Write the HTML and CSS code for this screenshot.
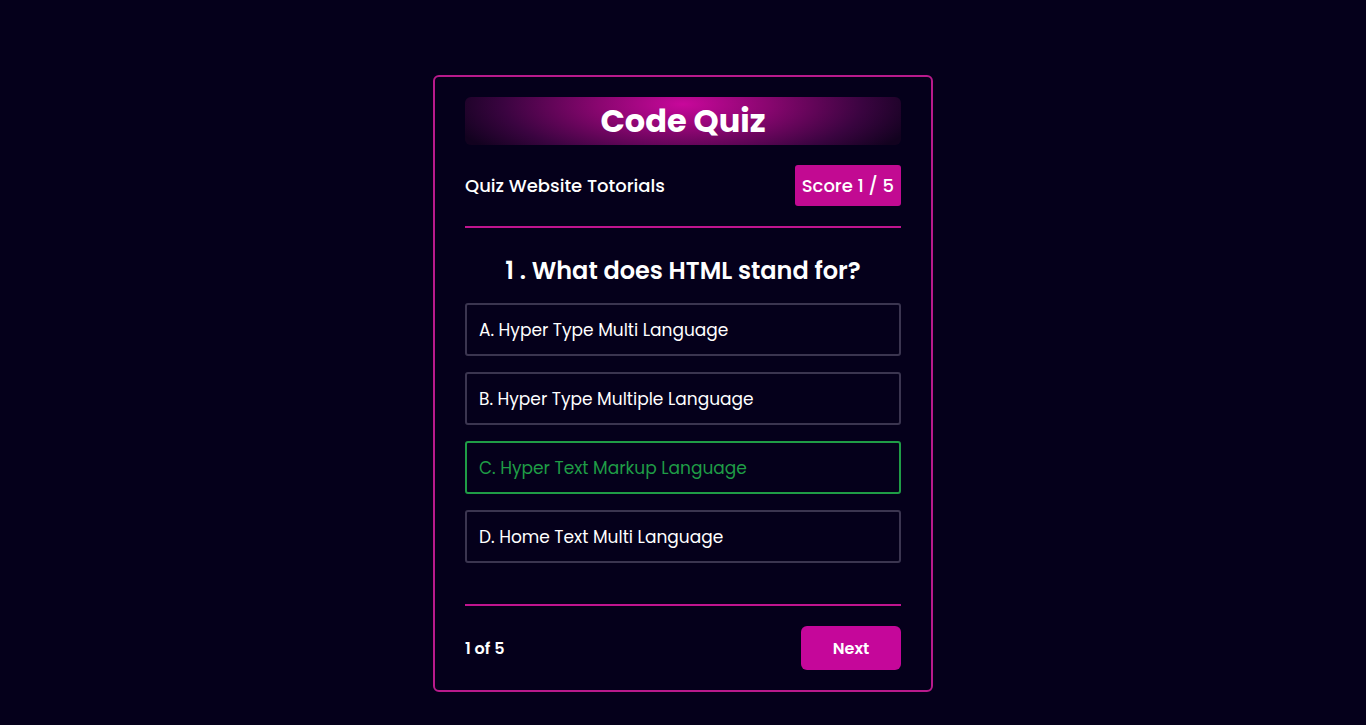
FILE: index.html
```html
<!DOCTYPE html>
<html lang="en">
<head>
<meta charset="utf-8">
<title>Code Quiz</title>
<link rel="stylesheet" href="styles.css">
</head>
<body>
<main class="page">
  <section class="card">
    <h1 class="title">Code Quiz</h1>
    <div class="header">
      <span class="subtitle">Quiz Website Totorials</span>
      <span class="score">Score 1 / 5</span>
    </div>
    <hr class="rule">
    <h2 class="question">1 . What does HTML stand for?</h2>
    <ul class="options">
      <li class="option">A. Hyper Type Multi Language</li>
      <li class="option">B. Hyper Type Multiple Language</li>
      <li class="option correct">C. Hyper Text Markup Language</li>
      <li class="option">D. Home Text Multi Language</li>
    </ul>
    <hr class="rule rule-bottom">
    <div class="footer">
      <span class="count">1 of 5</span>
      <button class="next">Next</button>
    </div>
  </section>
</main>
</body>
</html>
```
FILE: styles.css
```css
* { box-sizing: border-box; }
html, body {
  margin: 0;
  padding: 0;
  background: #05001b;
  font-family: Poppins, "Inter", "Noto Sans", sans-serif;
  color: #ffffff;
}
.page {
  min-height: 725px;
  display: flex;
  justify-content: center;
  align-items: flex-start;
  padding-top: 75px;
}
.card {
  width: 500px;
  border: 2px solid #b81a8c;
  border-radius: 6px;
  padding: 20px 30px 20px;
  background: #05001b;
}
.title {
  margin: 0;
  height: 48px;
  border-radius: 6px;
  background: radial-gradient(ellipse 55% 160% at 50% 15%, #c8089b 0%, #8a0670 35%, #3a0440 75%, #12021f 100%);
  font-size: 32px;
  font-weight: 700;
  line-height: 48px;
  text-align: center;
}
.header {
  margin-top: 20px;
  display: flex;
  justify-content: space-between;
  align-items: center;
}
.subtitle {
  font-size: 18px;
  font-weight: 500;
}
.score {
  background: #c20a92;
  border-radius: 3px;
  height: 41px;
  padding: 0 7px;
  display: flex;
  align-items: center;
  font-size: 18px;
  font-weight: 500;
}
.rule {
  margin: 20px 0 0;
  border: 0;
  height: 2px;
  background: #c0148f;
}
.question {
  margin: 25px 0 14px;
  text-align: center;
  font-size: 24px;
  font-weight: 600;
  line-height: 36px;
}
.options {
  list-style: none;
  margin: 0;
  padding: 0;
  display: flex;
  flex-direction: column;
  gap: 16px;
}
.option {
  height: 53px;
  border: 2px solid #3b3550;
  border-radius: 3px;
  padding: 0 12px;
  display: flex;
  align-items: center;
  font-size: 17px;
  font-weight: 400;
}
.option.correct {
  border-color: #1f9c46;
  color: #1f9c46;
}
.rule-bottom {
  margin-top: 41px;
}
.footer {
  margin-top: 20px;
  display: flex;
  justify-content: space-between;
  align-items: center;
}
.count {
  font-size: 16px;
  font-weight: 600;
}
.next {
  width: 100px;
  height: 44px;
  border: 0;
  border-radius: 6px;
  background: #c5079a;
  color: #ffffff;
  font-family: inherit;
  font-size: 16px;
  font-weight: 600;
}
```
